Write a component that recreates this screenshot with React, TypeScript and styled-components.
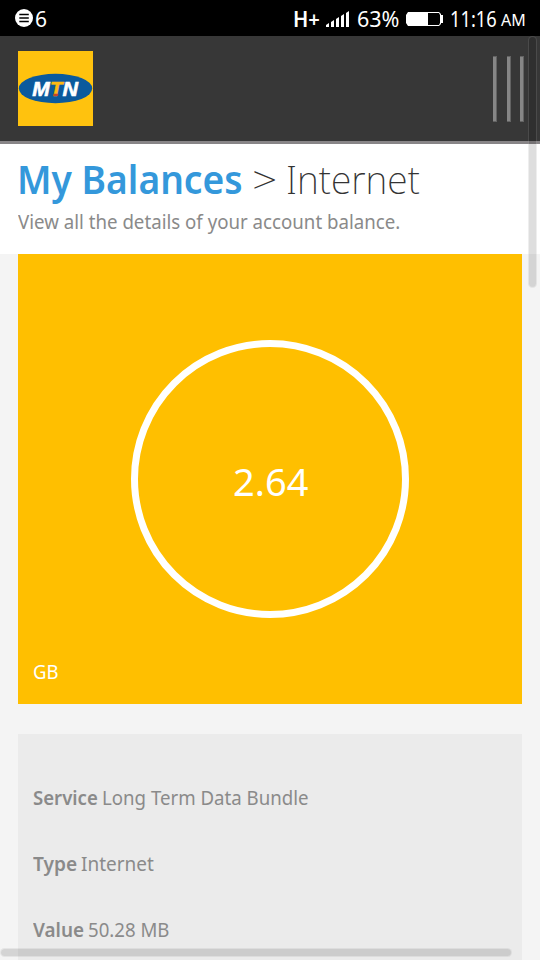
import React, { useLayoutEffect, useRef, useState } from "react";
import styled, { createGlobalStyle } from "styled-components";

const GlobalStyle = createGlobalStyle`
  *, *::before, *::after { box-sizing: border-box; }
  html, body { margin: 0; padding: 0; height: 100%; overflow: hidden; }
  body { background: #f4f4f4; }
`;

const sans = '"Noto Sans", "Open Sans", sans-serif';

const Screen = styled.div`
  position: relative;
  display: flex;
  flex-direction: column;
  width: 540px;
  height: 960px;
  overflow: hidden;
  background: #f4f4f4;
  color: #8a8a8a;
  font-family: ${sans};
  font-size: 20px;
  font-weight: 400;
`;

const FitBox = styled.span<{ $width: number }>`
  display: inline-block;
  flex: none;
  width: ${(p) => p.$width}px;
  white-space: nowrap;
`;

const FitInner = styled.span`
  display: inline-block;
  transform-origin: 0 50%;
`;

/* Condenses a run of text so that it fills the given width. */
function Fit({ width, children }: { width: number; children: React.ReactNode }) {
  const ref = useRef<HTMLSpanElement>(null);
  const [scale, setScale] = useState(1);
  useLayoutEffect(() => {
    if (ref.current) setScale(width / ref.current.offsetWidth);
  }, [width, children]);
  return (
    <FitBox $width={width}>
      <FitInner ref={ref} style={{ transform: `scaleX(${scale})` }}>
        {children}
      </FitInner>
    </FitBox>
  );
}

const StatusBar = styled.div`
  display: flex;
  flex: none;
  align-items: center;
  height: 36px;
  padding: 2px 14px 0 15px;
  background: #000;
  color: #fff;
  line-height: 36px;
`;

const StatusText = styled.span<{ $size?: number; $weight?: number; $left?: number; $drop?: number }>`
  display: flex;
  height: 36px;
  line-height: 36px;
  margin-left: ${(p) => p.$left ?? 0}px;
  padding-top: ${(p) => p.$drop ?? 0}px;
  font-size: ${(p) => p.$size ?? 21}px;
  font-weight: ${(p) => p.$weight ?? 400};
`;

const StatusIcon = styled.svg<{ $left?: number; $lift?: number }>`
  display: block;
  flex: none;
  margin-left: ${(p) => p.$left ?? 0}px;
  margin-bottom: ${(p) => p.$lift ?? 0}px;
`;

const Spacer = styled.div`
  flex: 1;
`;

const Header = styled.header`
  display: flex;
  flex: none;
  justify-content: space-between;
  height: 108px;
  padding: 15px 16px 0 18px;
  background: #373737;
  border-bottom: 3px solid #888587;
`;

const Logo = styled.svg`
  display: block;
  width: 75px;
  height: 75px;
`;

const MenuButton = styled.button`
  display: flex;
  justify-content: space-between;
  width: 31px;
  height: 66px;
  margin: 5px 0 0;
  padding: 0;
  border: 0;
  background: none;
`;

const MenuBar = styled.span`
  width: 4px;
  height: 66px;
  background: #868686;
  border: solid #636363;
  border-width: 1px 1px 1px 0;
`;

const TitleBlock = styled.section`
  flex: none;
  height: 110px;
  padding: 8px 17px 0;
  background: #fff;
`;

const Title = styled.h1`
  display: flex;
  margin: 0;
  height: 55px;
  line-height: 54px;
  color: #333;
  font-size: 39px;
  font-weight: 200;
`;

const TitleLink = styled.a`
  color: #3498db;
  font-weight: 600;
`;

const Separator = styled.span`
  margin: 0 9px 0 9px;
`;

const Subtitle = styled.p`
  display: flex;
  margin: 0;
  padding-left: 1px;
  height: 30px;
  line-height: 30px;
`;

const BalanceCard = styled.section`
  display: flex;
  flex: none;
  flex-direction: column;
  align-items: center;
  height: 450px;
  margin: 0 18px;
  padding: 86px 15px 0;
  background: #ffbf00;
  color: #fff;
`;

const Ring = styled.div`
  display: flex;
  align-items: center;
  justify-content: center;
  width: 278px;
  height: 278px;
  padding-top: 3px;
  border: 7px solid #fff;
  border-radius: 50%;
  font-size: 38.5px;
  line-height: 54px;
`;

const Unit = styled.div`
  align-self: flex-start;
  margin-top: 39px;
  height: 30px;
  line-height: 30px;
`;

const Details = styled.dl`
  display: flex;
  flex: 1;
  flex-direction: column;
  gap: 36px;
  margin: 30px 18px 0;
  padding: 49px 15px 0;
  background: #ebebeb;
  overflow: hidden;
`;

const DetailRow = styled.div`
  display: flex;
  flex: none;
  gap: 4px;
  height: 30px;
  line-height: 30px;
`;

const DetailName = styled.dt`
  font-weight: 600;
`;

const DetailValue = styled.dd`
  margin: 0;
`;

const ScrollThumb = styled.div<{ $vertical?: boolean }>`
  position: absolute;
  ${(p) =>
    p.$vertical
      ? "top: 36px; right: 3px; width: 9px; height: 252px;"
      : "left: 0; bottom: 3px; width: 512px; height: 9px;"}
  border-radius: 5px;
  border: 1px solid rgba(160, 160, 160, 0.18);
  background: rgba(0, 0, 0, 0.13);
  background-clip: padding-box;
`;

const details = [
  { name: "Service", value: "Long Term Data Bundle", nameWidth: 65, valueWidth: 207 },
  { name: "Type", value: "Internet", nameWidth: 44, valueWidth: 73 },
  { name: "Value", value: "50.28 MB", nameWidth: 51, valueWidth: 81 },
];

export default function App() {
  return (
    <Screen>
      <GlobalStyle />
      <StatusBar>
        <StatusIcon $lift={2} width="18" height="18" viewBox="0 0 18 18">
          <circle cx="9" cy="9" r="9" fill="#fff" />
          <path d="M4.3 5.5h9.5M4.3 9h9.5M4.3 12.5h9.5" stroke="#000" strokeWidth="1.3" />
        </StatusIcon>
        <StatusText $left={2}>
          <Fit width={12}>6</Fit>
        </StatusText>
        <Spacer />
        <StatusText $weight={600}>
          <Fit width={27}>H+</Fit>
        </StatusText>
        <StatusIcon $left={6} width="24" height="16" viewBox="0 0 24 16">
          <path
            d="M0 14L3 12V16H0zM5 11L8 9V16H5zM10 8L13 6V16H10zM15 5L18 3V16H15zM20 2L23 0V16H20z"
            fill="#fff"
          />
        </StatusIcon>
        <StatusText $left={7}>
          <Fit width={42}>63%</Fit>
        </StatusText>
        <StatusIcon $left={7} width="38" height="14" viewBox="0 0 38 14">
          <path d="M2 0H33L35 2V3H37V11H35V12L33 14H2L0 11V3Z" fill="#fff" />
          <path d="M22 1H33L34 3V11L33 13H22Z" fill="#000" />
        </StatusIcon>
        <StatusText $left={6}>
          <Fit width={47}>11:16</Fit>
        </StatusText>
        <StatusText $left={4} $size={16} $drop={1}>
          <Fit width={25}>AM</Fit>
        </StatusText>
      </StatusBar>

      <Header>
        <Logo viewBox="0 0 75 75">
          <rect width="75" height="75" fill="#ffc20e" />
          <ellipse cx="37.5" cy="37.5" rx="36.7" ry="14.7" fill="#0b5a9d" />
          <g
            fontFamily='"Liberation Sans", Arial, sans-serif'
            fontSize="20.5"
            fontWeight="700"
            fontStyle="italic"
            strokeWidth="0.6"
          >
            <text x="14.2" y="44.7" textLength="17.5" lengthAdjust="spacingAndGlyphs" fill="#fff" stroke="#fff">M</text>
            <text x="32" y="44.7" textLength="12.5" lengthAdjust="spacingAndGlyphs" fill="#fdb913" stroke="#fdb913">T</text>
            <text x="44.5" y="44.7" textLength="15.5" lengthAdjust="spacingAndGlyphs" fill="#fff" stroke="#fff">N</text>
          </g>
          <path d="M35.6 42.8H40.4L40 45H35.2Z" fill="#c8442e" />
        </Logo>
        <MenuButton aria-label="Menu">
          <MenuBar />
          <MenuBar />
          <MenuBar />
        </MenuButton>
      </Header>

      <TitleBlock>
        <Title>
          <TitleLink>
            <Fit width={226}>My Balances</Fit>
          </TitleLink>
          <Separator>
            <Fit width={25}>&gt;</Fit>
          </Separator>
          <Fit width={134}>Internet</Fit>
        </Title>
        <Subtitle>
          <Fit width={382}>View all the details of your account balance.</Fit>
        </Subtitle>
      </TitleBlock>

      <BalanceCard>
        <Ring>
          <Fit width={75}>2.64</Fit>
        </Ring>
        <Unit>
          <Fit width={26}>GB</Fit>
        </Unit>
      </BalanceCard>

      <Details>
        {details.map((d) => (
          <DetailRow key={d.name}>
            <DetailName>
              <Fit width={d.nameWidth}>{d.name}</Fit>
            </DetailName>
            <DetailValue>
              <Fit width={d.valueWidth}>{d.value}</Fit>
            </DetailValue>
          </DetailRow>
        ))}
      </Details>

      <ScrollThumb $vertical />
      <ScrollThumb />
    </Screen>
  );
}
